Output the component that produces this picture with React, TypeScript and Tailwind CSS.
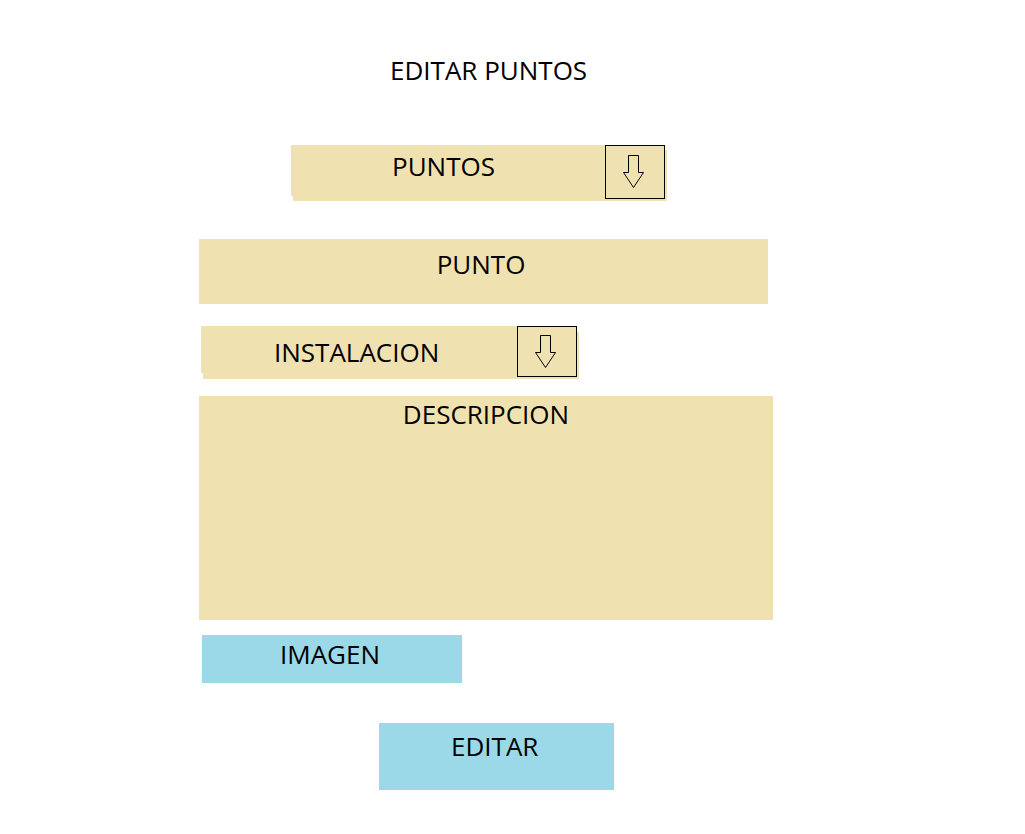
import React from "react";

const Arrow = () => (
  <svg width="21" height="33" viewBox="0 0 21 33" className="block">
    <polygon
      points="5.5,0.5 15.5,0.5 15.5,17.5 20.5,17.5 10.5,32.5 0.5,17.5 5.5,17.5"
      fill="none"
      stroke="#000"
      strokeWidth="1"
    />
  </svg>
);

export default function App() {
  const font = { fontFamily: '"Open Sans", "Noto Sans", sans-serif' };
  return (
    <div className="w-[1025px] h-[834px] bg-white text-black overflow-hidden" style={font}>
      <div className="flex flex-col">
        <div className="pt-[52px] pl-[390px] text-[26px] leading-[36px]">EDITAR PUNTOS</div>

        <div className="mt-[57px] ml-[291px] w-[374px] h-[51px] bg-[#EFE2B0] shadow-[2px_5px_0_#EFE2B0] flex">
          <div className="flex-1 pl-[101px] pt-[3px] text-[26px] leading-[36px]">PUNTOS</div>
          <div className="w-[60px] h-[54px] shrink-0 border border-black flex justify-center items-center pr-[3px] pb-[1px]">
            <Arrow />
          </div>
        </div>

        <div className="mt-[43px] ml-[199px] w-[569px] h-[65px] bg-[#EFE2B0] flex justify-center pt-[7px] text-[26px] leading-[36px]">
          <span className="ml-[-5px]">PUNTO</span>
        </div>

        <div className="mt-[22px] ml-[201px] w-[376px] h-[47px] bg-[#EFE2B0] shadow-[2px_6px_0_#EFE2B0] flex">
          <div className="flex-1 pl-[73px] pt-[8px] text-[26px] leading-[36px]">INSTALACION</div>
          <div className="w-[60px] h-[51px] shrink-0 border border-black flex justify-center items-center pr-[3px] pb-[1px]">
            <Arrow />
          </div>
        </div>

        <div className="mt-[23px] ml-[199px] w-[574px] h-[224px] bg-[#EFE2B0] flex justify-center text-[26px] leading-[36px]">
          <span>DESCRIPCION</span>
        </div>

        <div className="mt-[15px] ml-[202px] w-[260px] h-[48px] bg-[#9BD9E9] pl-[78px] pt-[1px] text-[26px] leading-[36px]">
          IMAGEN
        </div>

        <div className="mt-[40px] ml-[379px] w-[235px] h-[67px] bg-[#9BD9E9] pl-[72px] pt-[5px] text-[26px] leading-[36px]">
          EDITAR
        </div>
      </div>
    </div>
  );
}
